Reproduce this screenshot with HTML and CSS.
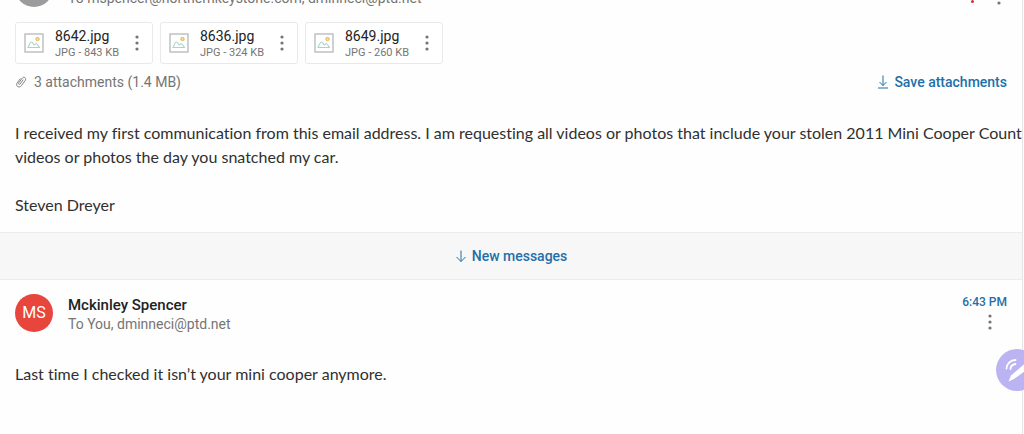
FILE: index.html
```
<!DOCTYPE html>
<html lang="en">
<head>
    <meta charset="UTF-8">
    <meta name="viewport" content="width=device-width, initial-scale=1.0">
    <title>Mail</title>
    <link rel="stylesheet" href="styles.css">
</head>
<body>
    <!-- shared icons -->
    <svg class="sprite" aria-hidden="true">
        <symbol id="icon-image" viewBox="0 0 20 20">
            <rect x="1" y="1" width="18" height="18" fill="#fff" stroke="#b4b8ba" stroke-width="1.3"/>
            <circle cx="13.5" cy="6" r="1.7" fill="#f6dc9a" stroke="#e3b85c"/>
            <path d="M4 14.5c1-2.500 2.400-5.500 3.600-5.500s1.700 3 2.700 3 1-1.500 1.900-1.500 2 2.200 3.300 4z" fill="none" stroke="#a5d5cb" stroke-width="1.100" stroke-linejoin="round"/>
        </symbol>
        <symbol id="icon-more" viewBox="0 0 4 16">
            <circle cx="2" cy="2" r="1.600"/>
            <circle cx="2" cy="8" r="1.600"/>
            <circle cx="2" cy="14" r="1.600"/>
        </symbol>
    </svg>

    <main class="thread">
        <article class="message">
            <header class="message-header scrolled">
                <span class="avatar avatar-grey"></span>
                <p class="recipients">To mspencer@northernkeystone.com, dminneci@ptd.net</p>
                <span class="flag"></span>
                <button class="more" aria-label="More actions"><svg><use href="#icon-more"/></svg></button>
            </header>

            <ul class="files">
                <li class="file">
                    <svg class="file-icon"><use href="#icon-image"/></svg>
                    <div class="file-info">
                        <span class="file-name">8642.jpg</span>
                        <span class="file-size">JPG - 843 KB</span>
                    </div>
                    <button class="more" aria-label="Options for 8642.jpg"><svg><use href="#icon-more"/></svg></button>
                </li>
                <li class="file">
                    <svg class="file-icon"><use href="#icon-image"/></svg>
                    <div class="file-info">
                        <span class="file-name">8636.jpg</span>
                        <span class="file-size">JPG - 324 KB</span>
                    </div>
                    <button class="more" aria-label="Options for 8636.jpg"><svg><use href="#icon-more"/></svg></button>
                </li>
                <li class="file">
                    <svg class="file-icon"><use href="#icon-image"/></svg>
                    <div class="file-info">
                        <span class="file-name">8649.jpg</span>
                        <span class="file-size">JPG - 260 KB</span>
                    </div>
                    <button class="more" aria-label="Options for 8649.jpg"><svg><use href="#icon-more"/></svg></button>
                </li>
            </ul>

            <div class="files-summary">
                <svg class="clip" viewBox="0 0 12 14">
                    <path d="M8 5 5.200 8.900c-.8 1.100-2.200.1-1.400-1L7.300 3.100c1.500-2.100 4.500.1 3 2.200L6.300 10.800c-2.200 2.900-6.200 0-4.100-2.900l3-4.100" fill="none" stroke="currentColor" stroke-width=".9" stroke-linecap="round"/>
                </svg>
                <span>3 attachments (1.4 MB)</span>
                <button class="link-button save">
                    <svg viewBox="0 0 12 14"><path d="M6 .5v10M2.500 7 6 10.500 9.500 7M1 13h10"/></svg>
                    Save attachments
                </button>
            </div>

            <div class="message-body">
                <p>I received my first communication from this email address. I am requesting all videos or photos that include your stolen 2011 Mini Cooper Countryman<br>videos or photos the day you snatched my car.</p>
                <p>Steven Dreyer</p>
            </div>
        </article>

        <div class="new-messages">
            <button class="link-button">
                <svg viewBox="0 0 12 14"><path d="M6 1.500v11M1.500 8 6 12.500 10.500 8"/></svg>
                New messages
            </button>
        </div>

        <article class="message">
            <header class="message-header">
                <span class="avatar">MS</span>
                <div class="sender">
                    <h2>Mckinley Spencer</h2>
                    <p class="recipients">To You, dminneci@ptd.net</p>
                </div>
                <div class="message-meta">
                    <time>6:43 PM</time>
                    <button class="more" aria-label="More actions"><svg><use href="#icon-more"/></svg></button>
                </div>
            </header>
            <div class="message-body">
                <p>Last time I checked it isn’t your mini cooper anymore.</p>
            </div>
        </article>
    </main>

    <button class="pen" aria-label="Pen menu">
        <svg viewBox="0 0 42 42">
            <path d="M10.500 19.500c0-4.500 4-8.500 9-8.500M14.500 20c0-2.500 2-4.500 5-5" fill="none" stroke="#fff" stroke-width="1.800" stroke-linecap="round"/>
            <path d="M12.500 32.500l2.500-6L29 14.500l5 4L18 30z" fill="#fff"/>
        </svg>
    </button>
</body>
</html>
```

FILE: styles.css
```
* {
    box-sizing: border-box;
}
body {
    margin: 0;
    font-family: Roboto, sans-serif;
    font-size: 14px;
    color: #212325;
    background: #fefefe;
    overflow: hidden;
}
h2, p, ul {
    margin: 0;
    padding: 0;
}
button {
    padding: 0;
    border: 0;
    background: none;
    font: inherit;
    cursor: pointer;
}
.sprite {
    display: none;
}
.thread {
    min-height: 100vh;
    margin-right: 1px;
    border-right: 1px solid #e6e6e6;
    overflow: hidden;
}
.message {
    padding: 0 15px;
}
.message-header {
    display: flex;
    gap: 15px;
    padding-top: 14px;
}
/* header of the first message is scrolled out, only its bottom edge shows */
.message-header.scrolled {
    align-items: flex-end;
    height: 7px;
    padding: 0;
    overflow: hidden;
}
.scrolled .recipients {
    flex: 1;
}
.avatar {
    flex: none;
    width: 38px;
    height: 38px;
    border-radius: 50%;
    background: #e8453c;
    color: #fff;
    font-size: 16px;
    line-height: 38px;
    text-align: center;
}
.avatar-grey {
    background: #9c9c9e;
}
.flag {
    width: 3px;
    height: 3px;
    margin: 0 8px 4px 0;
    border-radius: 50%;
    background: #d0313c;
}
.scrolled .more {
    height: 18px;
    padding-bottom: 2px;
    margin-right: 6px;
}
.sender {
    flex: 1;
    padding-top: 1px;
}
.sender h2 {
    font-size: 15px;
    font-weight: 500;
    line-height: 20px;
}
.recipients {
    color: #757575;
    font-size: 14px;
    line-height: 18px;
}
.message-meta {
    display: flex;
    flex-direction: column;
    align-items: flex-end;
    gap: 4px;
}
.message-meta time {
    color: #1f6fa8;
    font-size: 12px;
    font-weight: 500;
    line-height: 16px;
}
.message-meta .more {
    margin-right: 15px;
}
.more {
    display: flex;
    color: #757575;
}
.more svg {
    width: 4px;
    height: 16px;
    fill: currentColor;
}
.files {
    display: flex;
    gap: 7px;
    margin-top: 15px;
    list-style: none;
}
.file {
    display: flex;
    align-items: center;
    width: 138px;
    height: 42px;
    padding: 0 13px 0 8px;
    border: 1px solid #e9e9e9;
    border-radius: 3px;
    background: #fff;
}
.file-icon {
    width: 20px;
    height: 20px;
    margin-right: 11px;
}
.file-info {
    flex: 1;
    display: flex;
    flex-direction: column;
    padding-top: 3px;
    white-space: nowrap;
}
.file-name {
    font-size: 14px;
    line-height: 17px;
}
.file-size {
    color: #757575;
    font-size: 11px;
    line-height: 16px;
}
.files-summary {
    display: flex;
    align-items: center;
    margin-top: 8px;
    color: #757575;
    line-height: 20px;
}
.clip {
    width: 12px;
    height: 14px;
    margin-right: 7px;
}
.link-button {
    display: flex;
    align-items: center;
    gap: 5px;
    color: #1f6fa8;
    font-size: 14px;
    font-weight: 500;
    line-height: 20px;
}
.link-button svg {
    width: 12px;
    height: 14px;
    fill: none;
    stroke: currentColor;
    stroke-width: 1;
}
.save {
    margin-left: auto;
}
.message-body {
    padding: 29px 0 15px;
    color: #303030;
    font-family: Lato, sans-serif;
    font-size: 16px;
    font-variant-ligatures: none;
    line-height: 24px;
    white-space: nowrap;
}
.message-body p + p {
    margin-top: 24px;
}
.new-messages {
    display: flex;
    justify-content: center;
    padding: 13px 0;
    border-top: 1px solid #ececec;
    border-bottom: 1px solid #ececec;
    background: #f7f7f7;
}
.pen {
    position: fixed;
    top: 349px;
    right: -14px;
    width: 42px;
    height: 42px;
    border-radius: 50%;
    background: #bcb3f2;
}
.pen svg {
    display: block;
}
```
